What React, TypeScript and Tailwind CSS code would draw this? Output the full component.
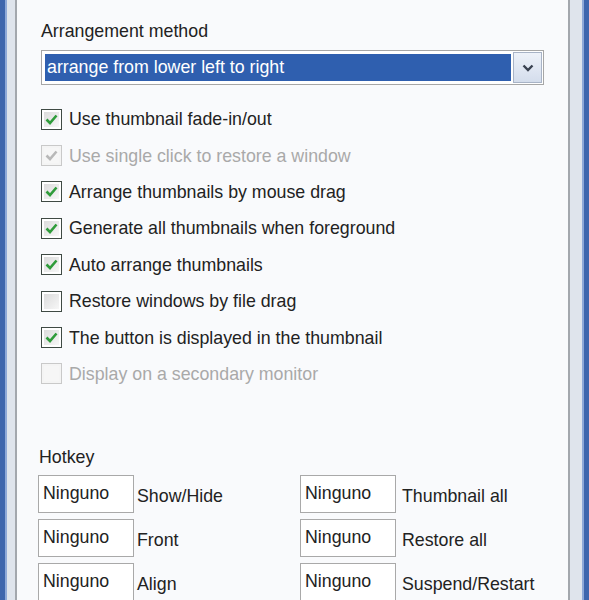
import React from 'react';

const font = { fontFamily: '"Liberation Sans", Arial, sans-serif' };

type Option = { label: string; checked: boolean; disabled?: boolean };

const options: Option[] = [
  { label: 'Use thumbnail fade-in/out', checked: true },
  { label: 'Use single click to restore a window', checked: true, disabled: true },
  { label: 'Arrange thumbnails by mouse drag', checked: true },
  { label: 'Generate all thumbnails when foreground', checked: true },
  { label: 'Auto arrange thumbnails', checked: true },
  { label: 'Restore windows by file drag', checked: false },
  { label: 'The button is displayed in the thumbnail', checked: true },
  { label: 'Display on a secondary monitor', checked: false, disabled: true },
];

const hotkeys = [
  ['Show/Hide', 'Thumbnail all'],
  ['Front', 'Restore all'],
  ['Align', 'Suspend/Restart'],
];

function CheckBox({ checked, disabled }: { checked: boolean; disabled?: boolean }) {
  return (
    <div
      className={`w-[21px] h-[21px] shrink-0 border p-[2px] ${
        disabled ? 'border-[#c9c9c9] bg-[#f4f4f4]' : 'border-[#3f4a44] bg-white'
      }`}
    >
      <div
        className={`w-full h-full flex items-center justify-center ${
          disabled ? 'bg-[#f6f6f6]' : 'bg-gradient-to-br from-[#dcdcdc] to-[#f7f7f7]'
        }`}
      >
        {checked && (
          <svg width="13" height="11" viewBox="0 0 13 11">
            <path
              d="M1.5 5.5 L5 9 L11.5 1.5"
              fill="none"
              stroke={disabled ? '#b8b8b8' : '#2f9c3a'}
              strokeWidth="2.6"
            />
          </svg>
        )}
      </div>
    </div>
  );
}

function HotkeyBox() {
  return (
    <div className="w-[96px] h-[38px] shrink-0 border border-[#a9a9a9] bg-white pl-[4px] pt-[4px] text-[17.8px] text-[#222]">
      Ninguno
    </div>
  );
}

export default function App() {
  return (
    <div className="w-[589px] h-[600px] flex overflow-hidden bg-white" style={font}>
      {/* left window frame */}
      <div className="w-[5px] bg-[#3f66ad]" />
      <div className="w-[2px] bg-[#8fa9d8]" />
      <div className="w-[8px] bg-[#dfe4ec]" />
      <div className="w-[2px] bg-[#a3a7ad]" />

      <div className="flex-1 bg-[#f9fafc] flex flex-col">
        <div className="pl-[24px] pr-[24px] pt-[21px]">
          <div className="text-[17.8px] text-[#222] leading-[20px]">Arrangement method</div>

          <div className="mt-[9px] h-[35px] border border-[#a6a6a6] bg-white flex items-stretch p-[3px] pr-[1px]">
            <div className="flex-1 bg-[#2f5faf] text-white text-[17.8px] leading-[26px] pl-[2px]">
              arrange from lower left to right
            </div>
            <div className="w-[29px] ml-[2px] -my-[2px] border border-[#a8b3c6] bg-gradient-to-b from-[#eef2f9] to-[#d4ddec] flex items-center justify-center">
              <svg width="12" height="8" viewBox="0 0 12 8">
                <path d="M1.5 1.5 L6 6 L10.5 1.5" fill="none" stroke="#3a4250" strokeWidth="2.4" />
              </svg>
            </div>
          </div>

          <div className="mt-[16px] flex flex-col">
            {options.map((o) => (
              <div key={o.label} className="h-[36.4px] flex items-center gap-[7px]">
                <CheckBox checked={o.checked} disabled={o.disabled} />
                <span
                  className={`text-[17.8px] leading-[20px] ${o.disabled ? 'text-[#a9a9a9]' : 'text-[#222]'}`}
                >
                  {o.label}
                </span>
              </div>
            ))}
          </div>
        </div>

        <div className="pl-[21px] mt-[55px]">
          <div className="text-[17.8px] text-[#222] leading-[20px] pl-[1px]">Hotkey</div>
          <div className="mt-[8px] flex flex-col gap-[6px]">
            {hotkeys.map(([a, b]) => (
              <div key={a} className="flex">
                <div className="w-[262px] flex items-center">
                  <HotkeyBox />
                  <span className="ml-[3px] mt-[4px] text-[17.8px] text-[#222]">{a}</span>
                </div>
                <div className="flex items-center">
                  <HotkeyBox />
                  <span className="ml-[6px] mt-[4px] text-[17.8px] text-[#222]">{b}</span>
                </div>
              </div>
            ))}
          </div>
        </div>
      </div>

      {/* right window frame */}
      <div className="w-[2px] bg-[#a3a7ad]" />
      <div className="w-[12px] bg-[#dfe4ec]" />
      <div className="w-[2px] bg-[#8fa9d8]" />
      <div className="w-[5px] bg-[#3f66ad]" />
    </div>
  );
}
